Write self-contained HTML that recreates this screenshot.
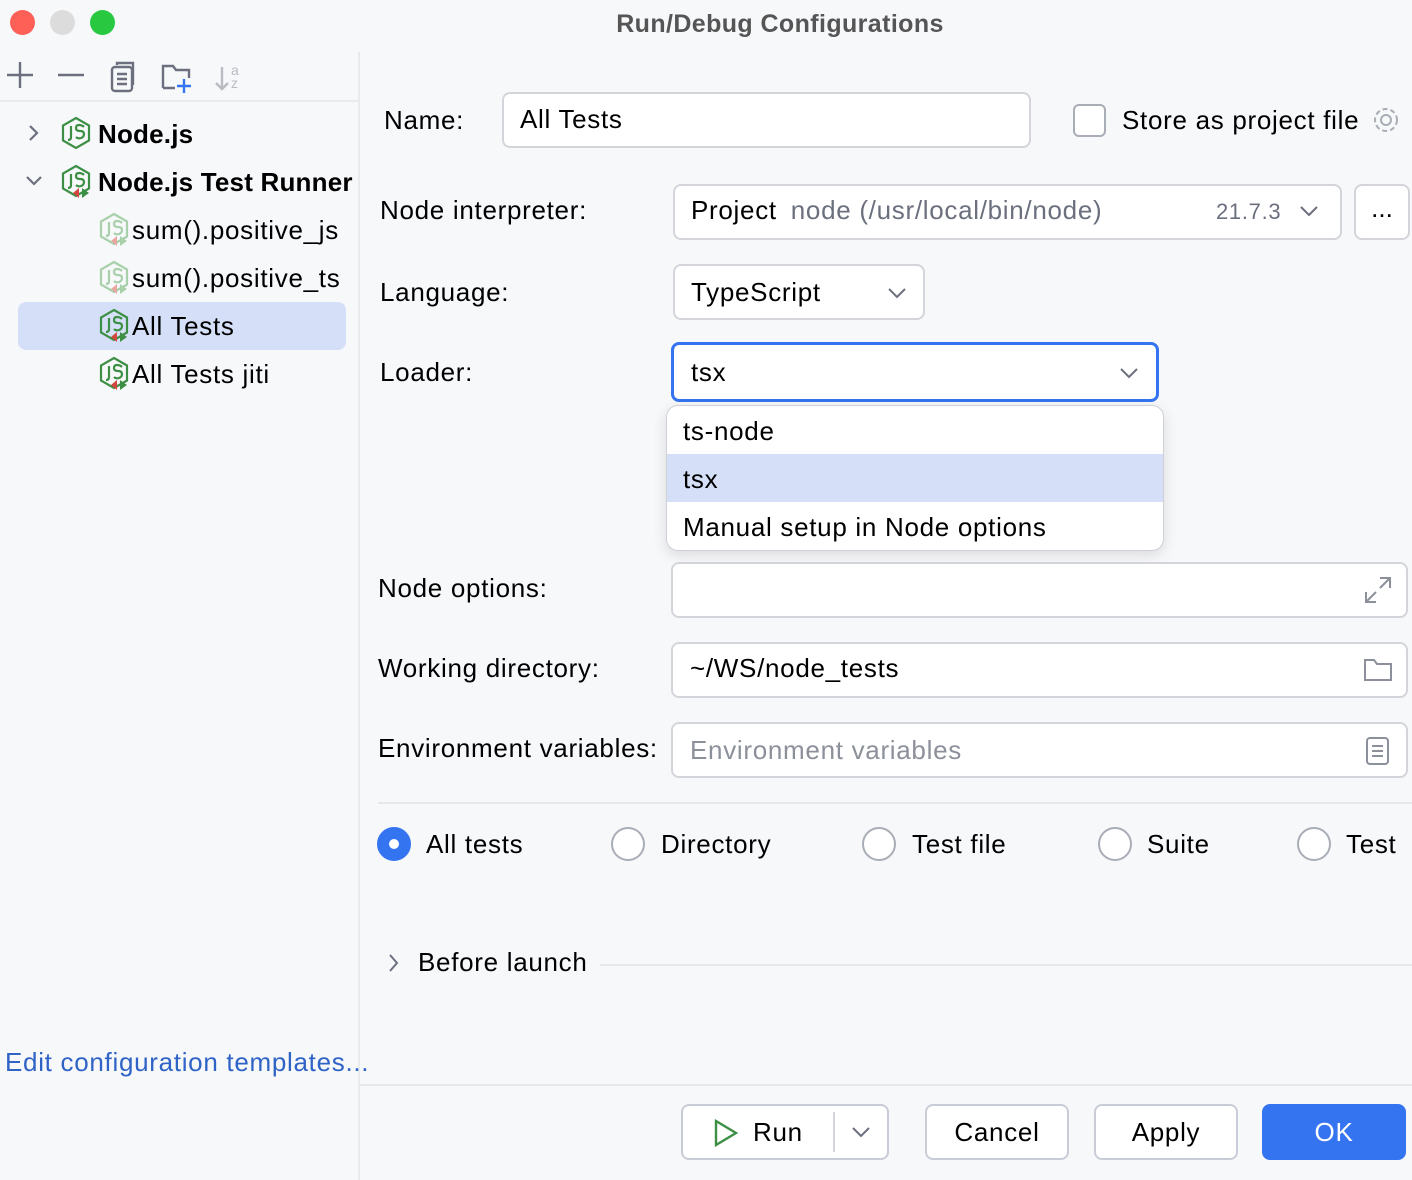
<!DOCTYPE html>
<html><head><meta charset="utf-8"><style>
*{box-sizing:border-box;margin:0;padding:0}
body{width:1412px;height:1180px;background:#f7f8fa;font-family:"Liberation Sans",sans-serif;font-size:26px;color:#000;position:relative;overflow:hidden}
.a{position:absolute;white-space:nowrap}
.f{position:absolute;background:#fff;border:2px solid #d3d5db;border-radius:8px}
.lbl{position:absolute;line-height:30px;letter-spacing:0.7px}
.rad{position:absolute;width:34px;height:34px;border:2px solid #a8adb6;border-radius:50%;background:#fff}
.btn{position:absolute;height:56px;border:2px solid #c9ccd6;border-radius:8px;background:#fff;text-align:center;line-height:52px;letter-spacing:0.7px}
</style></head><body>
<div class="a" style="left:10px;top:10px;width:25px;height:25px;border-radius:50%;background:#fe5f57"></div>
<div class="a" style="left:50px;top:10px;width:25px;height:25px;border-radius:50%;background:#dcdcdc"></div>
<div class="a" style="left:90px;top:10px;width:25px;height:25px;border-radius:50%;background:#28c840"></div>
<div class="a" style="left:0;top:10px;width:1560px;text-align:center;font-weight:bold;color:#555;font-size:25px;letter-spacing:0.4px">Run/Debug Configurations</div>
<div class="a" style="left:358px;top:52px;width:2px;height:1128px;background:#e9eaee"></div>
<div class="a" style="left:0;top:100px;width:358px;height:2px;background:#e9eaee"></div>
<svg class="a" style="left:0;top:55px" width="260" height="45" fill="none" stroke="#6c707e" stroke-width="2.4">
<path d="M7 20h26M20 7v26"/><path d="M58 20h26"/>
<rect x="112" y="12" width="20" height="24" rx="3"/><path d="M117 10v-2h16v22" /><path d="M117 19h10M117 24h10M117 29h10"/>
<path d="M163 33V11h10l3 4h13v8M163 33h12"/><path d="M184 24v14M177 31h14" stroke="#3574f0"/>
<path d="M222 12v22M216 28l6 6 6-6" stroke="#b8bbc2"/>
<text x="231" y="20" font-size="14" fill="#b8bbc2" stroke="none" font-family="Liberation Sans">a</text>
<text x="231" y="33" font-size="14" fill="#b8bbc2" stroke="none" font-family="Liberation Sans">z</text>
</svg>
<svg class="a" style="left:25px;top:120px" width="20" height="80" fill="none" stroke="#6c707e" stroke-width="2.2"><path d="M5 6l7 7-7 7"/><path d="M2 57l7 7 7-7"/></svg>
<div class="a" style="left:18px;top:302px;width:328px;height:48px;background:#d5e0f8;border-radius:8px"></div>
<svg class="a" style="left:60px;top:116px" width="80" height="280" fill="none" stroke-width="2.2" font-family="Liberation Sans">
<defs>
<g id="hx"><path d="M16 2l13 7.5v15L16 32 3 24.5v-15z"/><path d="M11 10v11q0 3-3 3M24 11q-2-2-5-2t-3 3 4 3 4 3-3 4-5-1"/></g>
</defs>
<g stroke="#3d8f45"><use href="#hx"/></g>
<g transform="translate(0,48)" stroke="#3d8f45"><use href="#hx"/><path d="M19 24l-6 5 6 5z" fill="#d3453f" stroke="none"/><path d="M22 24l7 5-7 5z" fill="#3d8f45" stroke="none"/></g>
<g transform="translate(38,96)" stroke="#a8d0ab"><use href="#hx"/><path d="M19 24l-6 5 6 5z" fill="#e9a7a4" stroke="none"/><path d="M22 24l7 5-7 5z" fill="#a8d0ab" stroke="none"/></g>
<g transform="translate(38,144)" stroke="#a8d0ab"><use href="#hx"/><path d="M19 24l-6 5 6 5z" fill="#e9a7a4" stroke="none"/><path d="M22 24l7 5-7 5z" fill="#a8d0ab" stroke="none"/></g>
<g transform="translate(38,192)" stroke="#3d8f45"><use href="#hx"/><path d="M19 24l-6 5 6 5z" fill="#d3453f" stroke="none"/><path d="M22 24l7 5-7 5z" fill="#3d8f45" stroke="none"/></g>
<g transform="translate(38,240)" stroke="#3d8f45"><use href="#hx"/><path d="M19 24l-6 5 6 5z" fill="#d3453f" stroke="none"/><path d="M22 24l7 5-7 5z" fill="#3d8f45" stroke="none"/></g>
</svg>
<div class="lbl a" style="left:98px;top:119px;font-weight:bold;letter-spacing:0.2px">Node.js</div>
<div class="lbl a" style="left:98px;top:167px;font-weight:bold;letter-spacing:0.2px">Node.js Test Runner</div>
<div class="lbl a" style="left:132px;top:215px">sum().positive_js</div>
<div class="lbl a" style="left:132px;top:263px">sum().positive_ts</div>
<div class="lbl a" style="left:132px;top:311px">All Tests</div>
<div class="lbl a" style="left:132px;top:359px">All Tests jiti</div>
<div class="lbl a" style="left:5px;top:1047px;color:#2f63c6">Edit configuration templates...</div>
<div class="lbl a" style="left:384px;top:105px">Name:</div>
<div class="f" style="left:502px;top:92px;width:529px;height:56px"></div>
<div class="lbl a" style="left:520px;top:104px">All Tests</div>
<div class="a" style="left:1073px;top:104px;width:33px;height:33px;border:2px solid #a8adb6;border-radius:6px;background:#fff"></div>
<div class="lbl a" style="left:1122px;top:105px">Store as project file</div>
<svg class="a" style="left:1370px;top:104px" width="32" height="32" fill="none" stroke="#a8adb6" stroke-width="2"><circle cx="16" cy="16" r="5"/><circle cx="16" cy="16" r="11" stroke-dasharray="5 3"/></svg>
<div class="lbl a" style="left:380px;top:195px">Node interpreter:</div>
<div class="f" style="left:673px;top:184px;width:669px;height:56px"></div>
<div class="lbl a" style="left:691px;top:195px">Project <span style="color:#6c707e;margin-left:6px">node (/usr/local/bin/node)</span></div>
<div class="lbl a" style="left:1216px;top:197px;color:#6c707e;font-size:22px">21.7.3</div>
<svg class="a" style="left:1298px;top:203px" width="22" height="16" fill="none" stroke="#6c707e" stroke-width="2"><path d="M3 4l8 8 8-8"/></svg>
<div class="f" style="left:1354px;top:184px;width:56px;height:56px;text-align:center;line-height:44px">...</div>
<div class="lbl a" style="left:380px;top:277px">Language:</div>
<div class="f" style="left:673px;top:264px;width:252px;height:56px"></div>
<div class="lbl a" style="left:691px;top:277px">TypeScript</div>
<svg class="a" style="left:886px;top:285px" width="22" height="16" fill="none" stroke="#6c707e" stroke-width="2"><path d="M3 4l8 8 8-8"/></svg>
<div class="lbl a" style="left:380px;top:357px">Loader:</div>
<div class="f" style="left:671px;top:342px;width:488px;height:60px;border:3px solid #3574f0"></div>
<div class="lbl a" style="left:691px;top:357px">tsx</div>
<svg class="a" style="left:1118px;top:365px" width="22" height="16" fill="none" stroke="#6c707e" stroke-width="2"><path d="M3 4l8 8 8-8"/></svg>
<div class="a" style="left:666px;top:405px;width:498px;height:146px;background:#fff;border:1px solid #cfd1d6;border-radius:12px;box-shadow:0 4px 14px rgba(0,0,0,.12);overflow:hidden">
<div style="position:absolute;left:0;top:48px;width:100%;height:48px;background:#d5e0f8"></div>
<div class="lbl a" style="left:16px;top:10px">ts-node</div>
<div class="lbl a" style="left:16px;top:58px">tsx</div>
<div class="lbl a" style="left:16px;top:106px">Manual setup in Node options</div>
</div>
<div class="lbl a" style="left:378px;top:573px">Node options:</div>
<div class="f" style="left:671px;top:562px;width:737px;height:56px"></div>
<svg class="a" style="left:1362px;top:574px" width="32" height="32" fill="none" stroke="#8c909a" stroke-width="2"><path d="M18 4h10v10M28 4L18 14M14 28H4V18M4 28l10-10"/></svg>
<div class="lbl a" style="left:378px;top:653px">Working directory:</div>
<div class="f" style="left:671px;top:642px;width:737px;height:56px"></div>
<div class="lbl a" style="left:690px;top:653px">~/WS/node_tests</div>
<svg class="a" style="left:1362px;top:656px" width="32" height="28" fill="none" stroke="#8c909a" stroke-width="2"><path d="M3 24V4h9l3 4h14v16z"/></svg>
<div class="lbl a" style="left:378px;top:733px">Environment variables:</div>
<div class="f" style="left:671px;top:722px;width:737px;height:56px"></div>
<div class="lbl a" style="left:690px;top:735px;color:#8c909a">Environment variables</div>
<svg class="a" style="left:1364px;top:735px" width="28" height="32" fill="none" stroke="#8c909a" stroke-width="2"><rect x="3" y="3" width="21" height="26" rx="3"/><path d="M8 11h11M8 16h11M8 21h11"/></svg>
<div class="a" style="left:378px;top:802px;width:1034px;height:2px;background:#e6e7ea"></div>
<div class="rad" style="left:377px;top:827px;background:#3574f0;border-color:#3574f0"><div style="position:absolute;left:10px;top:10px;width:10px;height:10px;border-radius:50%;background:#fff"></div></div>
<div class="lbl a" style="left:426px;top:829px">All tests</div>
<div class="rad" style="left:611px;top:827px"></div><div class="lbl a" style="left:661px;top:829px">Directory</div>
<div class="rad" style="left:862px;top:827px"></div><div class="lbl a" style="left:912px;top:829px">Test file</div>
<div class="rad" style="left:1098px;top:827px"></div><div class="lbl a" style="left:1147px;top:829px">Suite</div>
<div class="rad" style="left:1297px;top:827px"></div><div class="lbl a" style="left:1346px;top:829px">Test</div>
<svg class="a" style="left:384px;top:950px" width="20" height="26" fill="none" stroke="#6c707e" stroke-width="2"><path d="M6 5l7 8-7 8"/></svg>
<div class="lbl a" style="left:418px;top:947px">Before launch</div>
<div class="a" style="left:600px;top:964px;width:812px;height:2px;background:#e6e7ea"></div>
<div class="a" style="left:360px;top:1084px;width:1052px;height:2px;background:#e6e7ea"></div>
<div class="btn" style="left:681px;top:1104px;width:208px"></div>
<svg class="a" style="left:712px;top:1118px" width="28" height="30" fill="none" stroke="#3d8f45" stroke-width="2.4"><path d="M4 3l20 12-20 12z"/></svg>
<div class="lbl a" style="left:753px;top:1117px">Run</div>
<div class="a" style="left:833px;top:1112px;width:2px;height:40px;background:#d3d5db"></div>
<svg class="a" style="left:850px;top:1124px" width="22" height="16" fill="none" stroke="#6c707e" stroke-width="2"><path d="M3 4l8 8 8-8"/></svg>
<div class="btn" style="left:925px;top:1104px;width:144px">Cancel</div>
<div class="btn" style="left:1094px;top:1104px;width:144px">Apply</div>
<div class="btn" style="left:1262px;top:1104px;width:144px;background:#3574f0;border-color:#3574f0;color:#fff">OK</div>
</body></html>
